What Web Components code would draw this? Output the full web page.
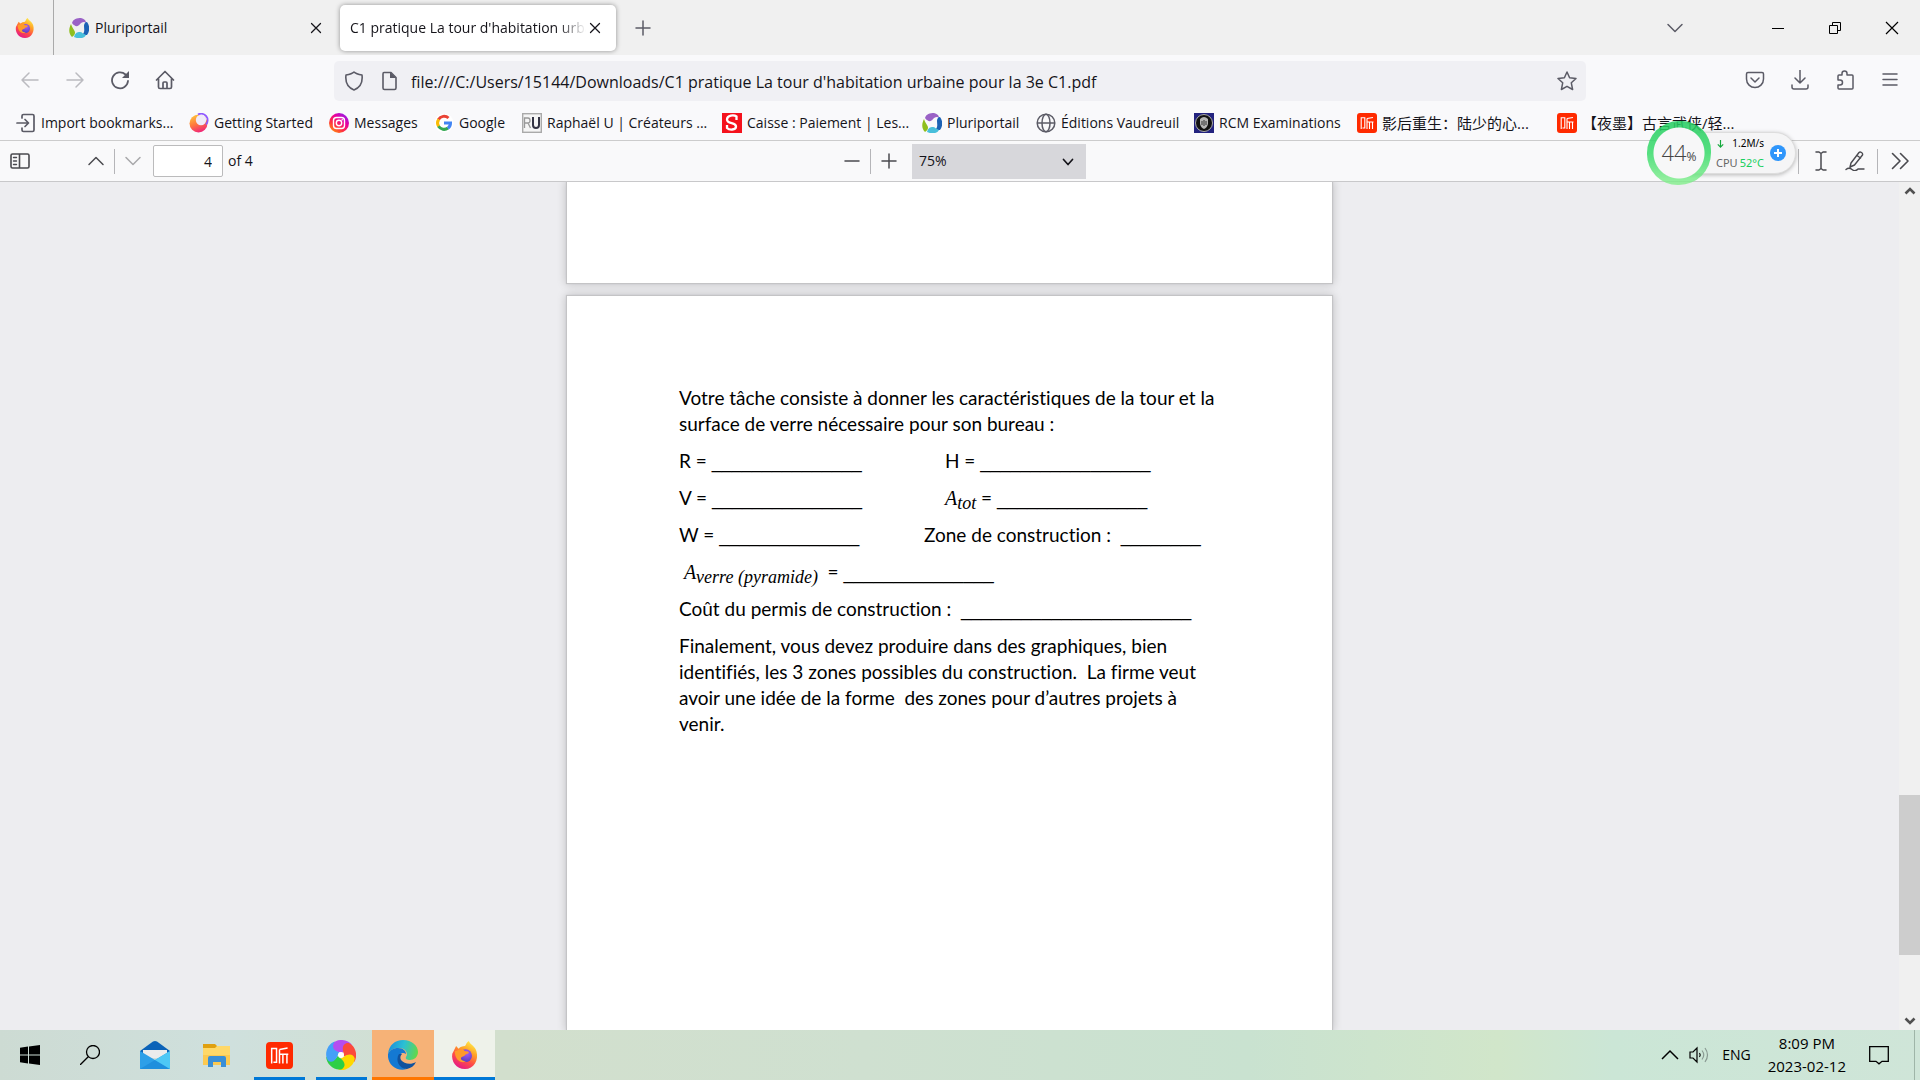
<!DOCTYPE html>
<html lang="en">
<head>
<meta charset="utf-8">
<title>C1 pratique La tour d'habitation urbaine pour la 3e C1.pdf</title>
<style>
html, body { margin: 0; height: 100%; }
body { font: 14px/20px "Open Sans", "Noto Sans CJK SC", sans-serif; color: #15141a; overflow: hidden; }
</style>
</head>
<body>
<desktop-screen></desktop-screen>
<script>
const stroke = (d, w = 1.5, extra = '') => `<path d="${d}" fill="none" stroke="currentColor" stroke-width="${w}" stroke-linecap="round" stroke-linejoin="round" ${extra}/>`;
const firefox = `
<defs><linearGradient id="f" x1=".8" y1="0" x2=".3" y2="1"><stop offset="0" stop-color="#fff44f"/><stop offset=".35" stop-color="#ffa526"/><stop offset=".65" stop-color="#ff4f45"/><stop offset="1" stop-color="#e3158a"/></linearGradient>
<radialGradient id="p" cx=".6" cy=".3" r=".8"><stop offset="0" stop-color="#a95cf5"/><stop offset="1" stop-color="#4b3bbd"/></radialGradient></defs>
<path fill="url(#f)" d="M2 8 4 4l2 2c1-1 3-2 5-2 1-1 1-3 3-4 1 3 5 4 6 8 2 7-2 14-9 14S0 16 1 10z"/>
<circle cx="11.500" cy="11.500" r="5" fill="url(#p)"/>
<path fill="#ff9a2b" d="M3 8c3-1 5-2 7-1l1 1c1 0 3 0 3 1s-2 1-3 2c0 1-2 1-3 2-1 2 2 3 4 3-4 2-9-1-9-8z"/>`;
const pluri = `
<path fill="#9a62c6" d="M3 5c1-4 5-5 9-5 3 1 5 2 5 5-2-2-4-1-6 1-2 3-5 3-8-1z"/>
<path fill="#1c62b5" d="M18 4c3 4 3 9 0 13-2 0-3 0-4-1 2-3 1-5 1-8 0-2 1-4 3-4z"/>
<path fill="#48bfdb" d="M17 17c-2 4-8 4-12 2 1-4 3-5 6-5 2 0 3 2 6 3z"/>
<path fill="#8fbf1e" d="M2 6c-2 4-3 9 1 13 3-2 4-4 2-7-1-2-2-3-3-6z"/>`;
const ting = `<rect width="20" height="20" rx="3" fill="#ff2a00"/>
<path d="M4.200 16V4.800h3.600V15H5.500M10 16V5.500M10 5.500l6-1M10 9h6.500M12.500 9v7M15.500 9v7" fill="none" stroke="#fff" stroke-width="1.100"/>`;
const ICONS = {
  firefox: [22, firefox], pluri: [20, pluri], ting: [20, ting],
  close: [20, stroke('M5 5l10 10M15 5L5 15', 1.4)],
  plus: [20, stroke('M10 3v14M3 10h14')],
  minus: [20, stroke('M3 10h14')],
  back: [20, stroke('M18 10H2M9 3l-7 7 7 7')],
  forward: [20, stroke('M2 10h16M11 3l7 7-7 7')],
  reload: [20, stroke('M18 11a8 8 0 1 1-2.500-6.500L17 6', 1.8) + '<path fill="currentColor" d="M19 1v7h-7z"/>'],
  home: [20, stroke('M1.500 10 10 1.500l8.500 8.500M3.500 9v8q0 1.500 1.500 1.500h10q1.500 0 1.500-1.500V9M8 18v-5q0-1 1-1h2q1 0 1 1v5', 1.7)],
  shield: [20, stroke('M10 1C8 3 5 3.500 2 4c-1 8 3 13 8 15 5-2 9-7 8-15-3-.5-6-1-8-3z', 1.6)],
  page: [20, stroke('M5 1.500h7l5 5V17q0 1.500-1.500 1.500h-10Q4 18.500 4 17V3q0-1.500 1-1.500z', 1.6) + '<path fill="currentColor" d="M11 1l6 6h-6z"/>'],
  star: [20, stroke('M10 1l2.600 5.800 6.400.7-4.700 4.300 1.300 6.700L10 15.300 4.400 18.500l1.300-6.700L1 7.500l6.400-.7z', 1.5)],
  pocket: [20, stroke('M3 2.500h14q1.500 0 1.500 1.500v5c0 5-4 8.500-8.500 8.500S1.500 14 1.500 9V4q0-1.500 1.500-1.500zM6 8l4 4 4-4', 1.5)],
  download: [20, stroke('M10 0v13M5 8l5 5 5-5M2 15v2q0 2 2 2h12q2 0 2-2v-2', 1.5)],
  puzzle: [20, stroke('M3 10V6q0-1 1-1h3V3.500a2.500 2.500 0 0 1 5 0V5h5q1 0 1 1v12q0 1-1 1H4q-1 0-1-1v-3h2a2.500 2.500 0 0 0 0-5z', 1.5)],
  menu: [20, stroke('M3 4h14M3 9.500h14M3 15h14')],
  chevdown: [20, stroke('M3 6.500l7 7 7-7')],
  chevup: [20, stroke('M3 13.500l7-7 7 7')],
  chevsmall: [20, stroke('M5.500 7.500l4.500 5 4.500-5', 1.7)],
  min: [20, '<path d="M4 10.500h12" stroke="#000" fill="none"/>'],
  restore: [20, '<path d="M4.500 7.500h8v8h-8zM7.500 7.500v-3h8v8h-3" fill="none" stroke="#000"/>'],
  winclose: [20, '<path d="M4 4l12 12M16 4L4 16" fill="none" stroke="#000" stroke-width="1.200"/>'],
  import: [20, stroke('M6 5V3q0-1.500 1.500-1.500h9Q18 1.500 18 3v14q0 1.500-1.500 1.500h-9Q6 18.500 6 17v-2M1 10h11M9 6.500l3.500 3.500L9 13.500', 1.7)],
  started: [20, '<defs><linearGradient id="g" x1=".2" y1="0" x2=".6" y2="1"><stop offset="0" stop-color="#ffc83c"/><stop offset=".5" stop-color="#ff7a3c"/><stop offset="1" stop-color="#f0237a"/></linearGradient></defs><circle cx="9.500" cy="10.500" r="9" fill="url(#g)"/><circle cx="12" cy="7" r="5.200" fill="#efeaf8"/><path d="M9 1.500a6.500 6.500 0 0 1 8 10" fill="none" stroke="#9059ff" stroke-width="1.800"/>'],
  insta: [20, '<defs><linearGradient id="i" x1="0" y1="1" x2=".8" y2="0"><stop offset="0" stop-color="#ffb000"/><stop offset=".4" stop-color="#ff3040"/><stop offset=".7" stop-color="#e800a0"/><stop offset="1" stop-color="#8a20f0"/></linearGradient></defs><circle cx="10" cy="10" r="10" fill="url(#i)"/><rect x="4.500" y="4.500" width="11" height="11" rx="3" fill="none" stroke="#fff" stroke-width="1.400"/><circle cx="10" cy="10" r="2.700" fill="none" stroke="#fff" stroke-width="1.400"/><circle cx="13.200" cy="6.800" r=".8" fill="#fff"/>'],
  google: [20, '<circle cx="10" cy="10" r="9.500" fill="#fff"/><g fill="none" stroke-width="3"><path stroke="#ea4335" d="M4.500 6.500a6.500 6.500 0 0 1 10-1.500"/><path stroke="#fbbc05" d="M4.700 13.500a6.500 6.500 0 0 1 0-7.200"/><path stroke="#34a853" d="M14 15a6.500 6.500 0 0 1-9.500-1.700"/><path stroke="#4285f4" d="M10 10h6.500q0 3.300-2.600 5.200"/></g>'],
  ru: [20, '<rect x=".7" y=".7" width="18.600" height="18.600" fill="#f5f5f5" stroke="#aaa" stroke-width="1.400"/><path d="M2.500 15V5H6q2 0 2 2.500T6 10H3M6 10l2.500 5" fill="none" stroke="#999" stroke-width="1.300"/><path d="M11 4v8q0 3 3 3t3-3V4" fill="none" stroke="#334" stroke-width="2"/>'],
  s: [20, '<rect width="20" height="20" fill="#f5121d"/><path d="M14.500 7V3.500C12 1.500 5 2 5 6.500c0 5 9 2.500 9 7 0 4-7 3.500-9 1.500v-3" fill="none" stroke="#fff" stroke-width="2.300"/>'],
  globe: [20, '<g fill="none" stroke="#5b5b66" stroke-width="1.500"><circle cx="10" cy="10" r="8.800"/><ellipse cx="10" cy="10" rx="4" ry="8.800"/><path d="M1 10h18"/></g>'],
  rcm: [20, '<rect width="20" height="20" fill="#23237f"/><circle cx="10" cy="10" r="8.500" fill="#111" stroke="#aaa"/><path fill="#b5b5b5" d="M6 6q4-4 8 0v5q-1 4-4 5-3-1-4-5z"/><path d="M10 7v6M8 8v4M12 8v4" stroke="#333"/>'],
  sidebar: [20, stroke('M2.500 3h15q1.500 0 1.500 1.500v11q0 1.500-1.500 1.500h-15Q1 17 1 15.500v-11Q1 3 2.500 3zM9.500 3v14', 1.6) + stroke('M3.500 6.500h3M3.500 10h3M3.500 13.500h3', 1.4)],
  ibeam: [20, stroke('M5 1h3l2 1.500L12 1h3M10 2.500v15M5 19h3l2-1.500 2 1.500h3')],
  pen: [20, stroke('M6 12 14 1.500q1-1 2.500 0t1 2.500L9.500 14 5 16zM12 4.500l3.500 2.500M1 18.500q3-2.500 6 0t6-.5h6', 1.4)],
  more: [20, stroke('M2.500 2.500 10 10l-7.500 7.500M10.500 2.500 18 10l-7.500 7.500', 1.6)],
  win: [20, '<path d="M0 2.800 8 1.600V9.400H0zM9 1.500 20 0v9.400H9zM0 10.500h8v7.900L0 17.200zM9 10.500h11V20L9 18.500z"/>'],
  search: [20, '<g fill="none" stroke="#000" stroke-width="1.300"><circle cx="13" cy="7" r="6.500"/><path d="M8.500 11.500 0 20"/></g>'],
  mail: [30, '<path fill="#0b63b8" d="M0 11 13 1.500q2-1 4 0L30 11v6H0z"/><path fill="#ececec" d="M3 10h24v8H3z"/><path fill="#2d9fe8" d="M0 11l15 9 15-9v18H0z"/><path fill="#1f8fdd" d="M0 29 15 20l15 9z"/><path fill="#4ec8f5" d="M30 11v18L15 20z"/>'],
  folder: [30, '<path fill="#e0a010" d="M1 4h12l2 2v6H1z"/><path fill="#ffd868" d="M1 8h12l2-2h13v19H1z"/><path fill="#fcc950" d="M1 15h27v10H1z"/><path fill="#3a8fd6" d="M6 27V18q0-2 2-2h14q2 0 2 2v9h-5v-5h-8v5z"/>'],
  wheel: [30, ['#b54df0', '#fb4a3c', '#ffd800', '#2ecf45', '#45a0f8'].map((c, i) => `<path fill="${c}" transform="rotate(${i * 72} 15 15)" d="M14 12C8 12 4 9 6 4c5-6 16-5 20 1-6-2-9 1-9 8z"/>`).join('') + '<circle cx="15" cy="15" r="3" fill="#fff"/>'],
  edge: [30, '<defs><linearGradient id="a" x1="0" y1=".3" x2="1" y2=".5"><stop offset="0" stop-color="#1a8fdc"/><stop offset=".5" stop-color="#2bc0d4"/><stop offset="1" stop-color="#62d84a"/></linearGradient></defs><path fill="url(#a)" d="M0 14C1 5 7 0 15 0c9 0 15 6 15 12 0 5-4 8-8 8-3 0-5-1-4-3 3-4-1-9-7-9-5 0-9 2-11 6z"/><path fill="#1479d3" d="M0 14c2-4 6-6 10-6 5 0 8 3 8 6-4-3-8 1-7 6 1 4 4 8 8 9C8 32-1 24 0 14z"/><path fill="#10529e" d="M11 14c-4 6 0 15 8 15 4-1 7-3 9-7-5 3-12 2-15-2-1-2-1-4 1-6z"/>'],
  up: [20, '<path d="M2 14l8-8 8 8" fill="none" stroke="#000" stroke-width="1.500"/>'],
  sound: [20, '<path d="M1 7h3l4-4v14l-4-4H1z" fill="none" stroke="#000" stroke-width="1.200"/><path d="M10.500 8q1.500 2 0 4" fill="none" stroke="#000" stroke-width="1.200"/><path d="M13 5.500q3.500 4.500 0 9M16 3q5 7 0 14" fill="none" stroke="#8a9a92" stroke-width="1.200"/>'],
  note: [20, '<path d="M.7 1.700h18.600v14.600H13l-3 2.500-3-2.500H.7z" fill="none" stroke="#000" stroke-width="1.300"/>'],
  speed: [10, '<path d="M5 1v8M2 6l3 3 3-3" fill="none" stroke="#14a83c" stroke-width="1.300"/>'],
  boost: [16, '<circle cx="8" cy="8" r="8" fill="#2f96fb"/><path d="M8 4v8M4 8h8" stroke="#fff" stroke-width="2"/>'],
  arrow: [12, '<path d="M1.500 8.500 6 4l4.500 4.500" fill="none" stroke="#505050" stroke-width="2.600"/>']
};

const make = (name, html) => customElements.define(name, class extends HTMLElement {
  constructor() {
    super();
    const t = document.createElement('template');
    t.innerHTML = `<style>*{box-sizing:border-box}button{font:inherit;color:inherit;border:0;background:none;padding:0;display:grid;place-items:center}a{color:inherit;text-decoration:none}</style>` + html;
    this.attachShadow({ mode: 'open' }).append(t.content.cloneNode(true));
  }
});

customElements.define('line-icon', class extends HTMLElement {
  connectedCallback() {
    if (this.shadowRoot) return;
    const [box, art] = ICONS[this.getAttribute('name')];
    this.attachShadow({ mode: 'open' }).innerHTML =
      `<style>:host{display:block;flex:none;width:var(--size,20px);height:var(--size,20px)}svg{display:block;width:100%;height:100%}</style><svg viewBox="0 0 ${box} ${box}" aria-hidden="true">${art}</svg>`;
  }
});

make('browser-tab', `<style>
:host{display:flex;align-items:center;gap:6px;width:276px;height:46px;padding:0 12px 0 8px;border-radius:5px}
:host([selected]){background:#fff;box-shadow:0 0 5px #0006;padding-left:10px;gap:0}
.t{flex:1;min-width:0;overflow:hidden;white-space:nowrap;padding-top:1px}
:host([selected]) .t{-webkit-mask-image:linear-gradient(90deg,#000 calc(100% - 28px),transparent);mask-image:linear-gradient(90deg,#000 calc(100% - 28px),transparent)}
button{--size:18px}
</style><slot name="icon"></slot><span class="t"><slot></slot></span><button aria-label="Close tab"><line-icon name="close"></line-icon></button>`);

make('tab-strip', `<style>
:host{display:flex;align-items:center;height:55px;background:#f0f0f0;padding-right:18px}
.pin{width:54px;height:55px;border-right:1px solid #aaa;--size:20px;padding-right:4px}
browser-tab{margin-left:7px}
browser-tab[selected]{margin-left:3px}
.new{margin-left:17px;color:#5b5b66}
.win{margin-left:auto;display:flex;align-items:center;gap:37px}
.list{margin-right:46px;color:#5b5b66}
</style>
<button class="pin" aria-label="Firefox"><line-icon name="firefox"></line-icon></button>
<browser-tab><line-icon slot="icon" name="pluri"></line-icon>Pluriportail</browser-tab>
<browser-tab selected>C1 pratique La tour d'habitation urbaine</browser-tab>
<button class="new" aria-label="New tab"><line-icon name="plus"></line-icon></button>
<div class="win"><button class="list" aria-label="List tabs"><line-icon name="chevdown"></line-icon></button>
<button aria-label="Minimize"><line-icon name="min"></line-icon></button><button aria-label="Restore"><line-icon name="restore"></line-icon></button><button aria-label="Close"><line-icon name="winclose"></line-icon></button></div>`);

make('nav-bar', `<style>
:host{display:flex;align-items:center;height:50px;padding:0 20px;background:#f9f9fb;color:#5b5b66}
.l,.r{display:flex;gap:25px}
.l button:nth-child(-n+2){color:#bbbbc0}
.url{display:flex;align-items:center;gap:15px;height:40px;flex:1;margin:2px 159px 0 159px;padding:0 9px 0 10px;background:#f0f0f4;border-radius:5px}
input{flex:1;min-width:0;border:0;background:none;padding:1px 0 0;font:16px/24px "Open Sans",sans-serif;color:#15141a;outline:0;margin-left:-3px}
</style>
<div class="l"><button aria-label="Back"><line-icon name="back"></line-icon></button><button aria-label="Forward"><line-icon name="forward"></line-icon></button><button aria-label="Reload"><line-icon name="reload"></line-icon></button><button aria-label="Home"><line-icon name="home"></line-icon></button></div>
<div class="url"><line-icon name="shield"></line-icon><line-icon name="page"></line-icon><input aria-label="Address" value="file:///C:/Users/15144/Downloads/C1 pratique La tour d'habitation urbaine pour la 3e C1.pdf"><button aria-label="Bookmark this page"><line-icon name="star"></line-icon></button></div>
<div class="r"><button aria-label="Pocket"><line-icon name="pocket"></line-icon></button><button aria-label="Downloads"><line-icon name="download"></line-icon></button><button aria-label="Extensions"><line-icon name="puzzle"></line-icon></button><button aria-label="Menu"><line-icon name="menu"></line-icon></button></div>`);

make('book-mark', `<style>
:host{display:block;min-width:0}
:host([lang]){font-size:15px}
a{display:flex;align-items:center;gap:5px;white-space:nowrap}
</style><a href="#"><slot name="icon"></slot><span><slot></slot></span></a>`);

make('bookmarks-bar', `<style>
:host{display:grid;grid-template-columns:173px 140px 105px 88px 200px 200px 114px 158px 163px 200px 1fr;align-items:center;height:36px;padding:1px 0 0 16px;box-sizing:border-box;background:#f9f9fb;border-bottom:1px solid #ccc}
.i{color:#5b5b66}
</style>
<book-mark><line-icon class="i" slot="icon" name="import"></line-icon>Import bookmarks...</book-mark>
<book-mark><line-icon slot="icon" name="started"></line-icon>Getting Started</book-mark>
<book-mark><line-icon slot="icon" name="insta"></line-icon>Messages</book-mark>
<book-mark><line-icon slot="icon" name="google"></line-icon>Google</book-mark>
<book-mark><line-icon slot="icon" name="ru"></line-icon>Raphaël U | Créateurs ...</book-mark>
<book-mark><line-icon slot="icon" name="s"></line-icon>Caisse : Paiement | Les...</book-mark>
<book-mark><line-icon slot="icon" name="pluri"></line-icon>Pluriportail</book-mark>
<book-mark><line-icon slot="icon" name="globe"></line-icon>Éditions Vaudreuil</book-mark>
<book-mark><line-icon slot="icon" name="rcm"></line-icon>RCM Examinations</book-mark>
<book-mark lang="zh"><line-icon slot="icon" name="ting"></line-icon>影后重生：陆少的心...</book-mark>
<book-mark lang="zh"><line-icon slot="icon" name="ting"></line-icon>【夜墨】古言武侠/轻...</book-mark>`);

make('system-monitor', `<style>
:host{display:flex;align-items:center;font-family:"Noto Sans",sans-serif}
.pill{display:flex;align-items:center;gap:6px;height:42px;margin-left:-32px;padding:0 9px 0 36px;border-radius:0 21px 21px 0;background:#f5f5f6;border:1px solid #ddd;box-shadow:0 1px 4px #0004}
.ring{position:relative;z-index:1;width:64px;height:64px;border-radius:50% 46% 50% 48%;display:flex;align-items:baseline;justify-content:center;background:radial-gradient(circle,#f7f7f8 25px,transparent 26px),linear-gradient(#24cc60dd,#3bdb6ddd 50%,#86ef8ecc);color:#444}
.ring b{font:300 22px/62px "Open Sans",sans-serif}
.ring i{font:normal 12px/62px "Open Sans",sans-serif}
.d{font-size:11px;line-height:19px;color:#000;width:48px}
.d div{display:flex;justify-content:space-between;align-items:center;--size:9px;white-space:nowrap}
.n{font-size:10px}
.c{color:#666}.g{color:#16cf5c}
button{--size:16px}
</style><div class="ring"><b>44</b><i>%</i></div>
<div class="pill"><div class="d"><div><line-icon name="speed"></line-icon><span class="n">1.2M/s</span></div><div><span class="c">CPU</span><span class="g">52°C</span></div></div><button aria-label="Boost"><line-icon name="boost"></line-icon></button></div>`);

make('pdf-toolbar', `<style>
:host{display:grid;grid-template-columns:1fr auto 1fr;align-items:center;height:41px;padding:0 10px;background:#f9f9fa;border-bottom:1px solid #c8c8ca;color:#4a4a4f;position:relative}
div{display:flex;align-items:center}
.s{width:1px;height:25px;background:#b5b5b8}
.l .s{margin:0 8px}
.up{margin-left:56px}
input{width:70px;height:32px;border:1px solid #bbbbbc;border-radius:2px;background:#fff;text-align:right;padding:0 10px;font:14px/20px "Open Sans",sans-serif;margin:0 5px 0 10px;color:#15141a}
label{color:#15141a;display:flex;align-items:center}
.m{gap:8px;margin-left:8px}
.sel{position:relative;margin-left:5px;color:#15141a}
select{appearance:none;width:174px;height:35px;border:0;border-radius:0;background:#d7d7db;padding:0 7px;font:14px/20px "Open Sans",sans-serif;color:inherit}
.sel line-icon{position:absolute;right:8px;top:8px;pointer-events:none}
.r{justify-content:flex-end;gap:14px}
.r .s{margin:0 -2px}
system-monitor{position:absolute;right:124px;top:-20px}
</style>
<div class="l"><button aria-label="Toggle sidebar"><line-icon name="sidebar"></line-icon></button><button class="up" aria-label="Previous page"><line-icon name="chevup"></line-icon></button><span class="s"></span><button style="color:#a8a8aa" aria-label="Next page"><line-icon name="chevdown"></line-icon></button><label><input aria-label="Page" value="4">of 4</label></div>
<div class="m"><button aria-label="Zoom out"><line-icon name="minus"></line-icon></button><span class="s"></span><button aria-label="Zoom in"><line-icon name="plus"></line-icon></button><div class="sel"><select aria-label="Zoom"><option>75%</option></select><line-icon name="chevsmall"></line-icon></div></div>
<div class="r"><span class="s"></span><button aria-label="Text"><line-icon name="ibeam"></line-icon></button><button aria-label="Draw"><line-icon name="pen"></line-icon></button><span class="s"></span><button aria-label="Tools"><line-icon name="more"></line-icon></button></div>
<system-monitor></system-monitor>`);

make('pdf-page', `<style>
:host{display:block;flex:none;width:765px;box-sizing:border-box;background:#fff;box-shadow:0 0 1px 1px #c4c4c6,0 0 9px 1px #0003;padding:89px 112px;font:19px/26px Lato,sans-serif;font-variant-ligatures:none;color:#000}
:host([tail]){height:101px;padding:0}
</style><slot></slot>`);

make('math-var', `<style>
:host{display:inline-block;font:italic 20px/26px "Liberation Serif",serif}
sub{font-size:18px;line-height:1px;vertical-align:-4px}
</style><slot></slot><sub><slot name="sub"></slot></sub>`);

make('task-text', `<style>
p{margin:0 0 11px;white-space:nowrap}
.row{display:flex;white-space:pre;height:26px}
.row>span:first-child{width:var(--w,266px)}
u{font:18px/26px "Liberation Sans",sans-serif;text-decoration:none}
</style>
<p>Votre tâche consiste à donner les caractéristiques de la tour et la<br>surface de verre nécessaire pour son bureau :</p>
<p class="row"><span>R = <u>_______________</u></span><span>H = <u>_________________</u></span></p>
<p class="row"><span>V = <u>_______________</u></span><span><math-var>A<span slot="sub">tot</span></math-var> = <u>_______________</u></span></p>
<p class="row" style="--w:245px"><span>W = <u>______________</u></span><span>Zone de construction :  <u>________</u></span></p>
<p class="row"><span> <math-var>A<span slot="sub">verre (pyramide)</span></math-var>  = <u>_______________</u></span></p>
<p class="row"><span>Coût du permis de construction :  <u>_______________________</u></span></p>
<p>Finalement, vous devez produire dans des graphiques, bien<br>identifiés, les 3 zones possibles du construction.&nbsp; La firme veut<br>avoir une idée de la forme&nbsp; des zones pour d’autres projets à<br>venir.</p>`);

make('scroll-bar', `<style>
:host{display:flex;flex-direction:column;align-items:center;justify-content:space-between;width:21px;background:#f0f0f0;padding:3px 0;--size:12px}
.t{width:21px;flex:0 0 160px;background:#cdcdcd}
.a{flex:610 0 0}.b{flex:72 0 0}
.b{display:flex;align-items:flex-end}
.dn{transform:rotate(180deg)}
</style><div class="a"><line-icon name="arrow"></line-icon></div><div class="t"></div><div class="b"><line-icon class="dn" name="arrow"></line-icon></div>`);

make('pdf-viewer', `<style>
:host{display:flex;flex:1;min-height:0;background:#ededf0}
.v{flex:1;display:flex;flex-direction:column;align-items:center;gap:13px;overflow:hidden}
pdf-page:last-child{flex:1}
</style><div class="v"><pdf-page tail></pdf-page><pdf-page><task-text></task-text></pdf-page></div><scroll-bar></scroll-bar>`);

make('task-bar', `<style>
:host{display:flex;align-items:stretch;height:50px;background:linear-gradient(90deg,#cddbd3,#cfe0dd 12%,#d2dfcd 26%,#cfe0d0 45%,#c9e2d0 65%,#d1e6ca 78%,#cbe6d6 84%,#cfe5d8);color:#000}
button{width:62px;--size:30px;border-bottom:3px solid transparent;padding-top:3px}
.sm{--size:20px;width:60px}
.mail{margin-left:4px}
.ting{--size:27px}
.run{background:linear-gradient(#0078d7,#0078d7) 50% 100%/51px 3px no-repeat;border:0;padding:0}
.edge{background:#f6b277;border-color:#ff7600}
.ff{background:#eef2ea;border-color:#0078d7;width:61px;--size:28px}
.tray{margin-left:auto;display:flex;align-items:center;padding-right:5px}
.tray line-icon{--size:20px}
.tray span{margin:0 17px 0 13px}
time{font-size:15px;text-align:center;line-height:23px;margin-right:23px}
.n{border-right:1px solid #9fb5a8;height:50px;display:grid;align-items:center;padding-right:25px}
.v{margin-left:9px}
</style>
<button class="sm" aria-label="Start"><line-icon name="win"></line-icon></button>
<button class="sm" aria-label="Search"><line-icon name="search"></line-icon></button>
<button class="mail" aria-label="Mail"><line-icon name="mail"></line-icon></button>
<button aria-label="Files"><line-icon name="folder"></line-icon></button>
<button class="ting run" aria-label="Ting"><line-icon name="ting"></line-icon></button>
<button class="run" aria-label="Browser"><line-icon name="wheel"></line-icon></button>
<button class="edge" aria-label="Edge"><line-icon name="edge"></line-icon></button>
<button class="ff" aria-label="Firefox"><line-icon name="firefox"></line-icon></button>
<div class="tray"><line-icon name="up"></line-icon><line-icon class="v" name="sound"></line-icon><span>ENG</span><time>8:09 PM<br>2023-02-12</time><div class="n"><line-icon name="note"></line-icon></div></div>`);

make('desktop-screen', `<style>:host{display:flex;flex-direction:column;height:100vh}</style>
<tab-strip></tab-strip><nav-bar></nav-bar><bookmarks-bar></bookmarks-bar><pdf-toolbar></pdf-toolbar><pdf-viewer></pdf-viewer><task-bar></task-bar>`);
</script>
</body>
</html>
